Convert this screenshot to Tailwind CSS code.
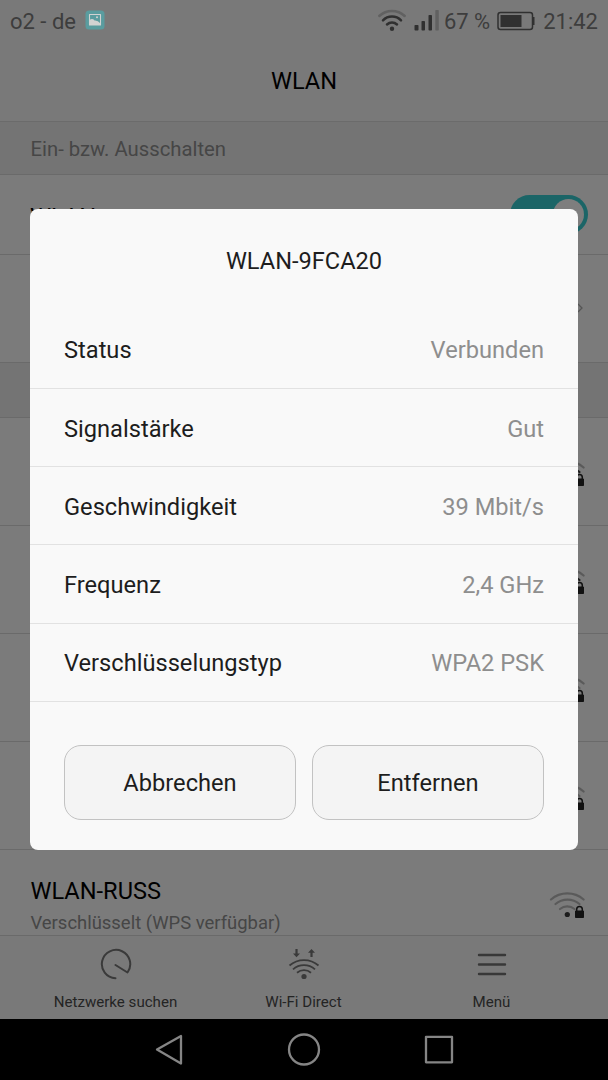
<!DOCTYPE html>
<html lang="de">
<head>
<meta charset="utf-8">
<title>WLAN</title>
<script src="https://cdn.jsdelivr.net/npm/@tailwindcss/browser@4"></script>
</head>
<body class="relative flex h-[1080px] w-[608px] flex-col overflow-hidden bg-[#7b7b7b] font-['Roboto','Noto_Sans',sans-serif] text-black">
<svg class="hidden">
  <symbol id="secured" viewBox="0 0 40 32">
    <g fill="none" stroke-width="2.200" stroke-linecap="round">
      <path d="M6 9.500A25 25 0 0 1 38.600 9.500" stroke="#5a5a5a"/><path d="M10.500 14A18.500 18.500 0 0 1 34.500 14M15 19A11.500 11.500 0 0 1 29.500 19" stroke="currentColor"/>
    </g>
    <circle cx="22.300" cy="24.500" r="2.600" fill="#1c1c1c"/>
    <path d="M30.500 21h8v6.500h-8z" fill="#111" stroke="#111" stroke-linejoin="round"/>
    <path d="M31.700 21v-1.700a2.800 2.800 0 0 1 5.600 0v1.700" fill="none" stroke="#111" stroke-width="1.500"/>
  </symbol>
</svg>

<header class="flex h-[122px] shrink-0 flex-col border-b border-[#6b6b6b] bg-[#797979]">
  <div class="flex h-[42px] items-center pr-[10px] pl-[10px] text-[22px] text-[#3d3d3d]">
    <span class="pt-px">o2 - de</span>
    <svg class="-mt-px ml-[9px] size-5" viewBox="0 0 20 20"><rect x=".5" y=".5" width="19" height="19" rx="3.500" fill="#5a9c9f"/><path d="M4.500 4.500h11v10.500h-11z" fill="none" stroke="#d2d2d2" stroke-width="1.100" stroke-linejoin="round"/><path d="M4.500 10q3-2 5 .5 3-.5 6 3v1.500h-11z" fill="#d2d2d2"/><circle cx="12" cy="7.300" r="1" fill="#d2d2d2"/></svg>
    <svg class="ml-auto h-6 w-[30px]" viewBox="0 0 30 24" fill="none" stroke-width="2.500" stroke-linecap="round"><path d="M2.300 7A18.500 18.500 0 0 1 27.700 7" stroke="#616161"/><path d="M6 11.300A12.500 12.500 0 0 1 24 11.300M10 15.500A7.500 7.500 0 0 1 20 15.500" stroke="#303030"/><circle cx="15" cy="19.700" r="2.200" fill="#303030"/></svg>
    <svg class="ml-[7px] h-6 w-[25px]" viewBox="0 0 25 24"><g fill="#303030"><rect x=".5" y="16" width="4" height="5.500" rx=".8"/><rect x="7.500" y="12" width="3.500" height="9.500" rx=".8"/><rect x="14.500" y="6" width="3.500" height="15.500" rx=".8"/></g><rect x="21.300" y="1" width="3.500" height="20.500" rx=".8" fill="#616161"/></svg>
    <span class="ml-[5px] pt-px">67 %</span>
    <svg class="ml-[7px] h-5 w-[38px]" viewBox="0 0 38 20"><rect x="1" y="1.500" width="34.500" height="17" rx="2.500" fill="none" stroke="#303030" stroke-width="1.500"/><path d="M3.500 4H24.500v12H3.500zM35.500 6h2v8h-2z" fill="#303030"/></svg>
    <span class="ml-[8px] pt-px">21:42</span>
  </div>
  <h1 class="flex h-20 items-center justify-center pt-px text-[23.600px]">WLAN</h1>
</header>

<main class="flex h-[813px] shrink-0 flex-col overflow-hidden">
  <div class="flex h-[53px] shrink-0 items-center border-b border-[#6a6a6a] bg-[#747474] pt-0.5 pl-[30.500px] text-[20.300px] text-[#464646]">Ein- bzw. Ausschalten</div>
  <div class="flex h-20 shrink-0 items-center justify-between border-b border-[#6a6a6a] pr-5 pl-[30px] text-[23.600px]">
    <span class="pt-1.5">WLAN</span>
    <span class="flex h-[39px] w-[78px] items-center justify-end rounded-full bg-[#1b6567] pr-1"><span class="size-[31px] rounded-full bg-[#7e7e7e]"></span></span>
  </div>
  <div class="flex h-[108px] shrink-0 items-center justify-end border-b border-[#6a6a6a] pr-[25px]">
    <svg class="h-4 w-3" viewBox="0 0 12 16" fill="none" stroke="#555" stroke-width="1.300"><path d="M7 3l4 4-4 4"/></svg>
  </div>
  <div class="h-[55px] shrink-0 border-b border-[#6a6a6a] bg-[#747474]"></div>
  <div class="flex h-[108px] shrink-0 items-center justify-end border-b border-[#6a6a6a] pr-[23px] text-[#1c1c1c]"><svg class="mt-1 h-8 w-10"><use href="#secured"/></svg></div>
  <div class="flex h-[108px] shrink-0 items-center justify-end border-b border-[#6a6a6a] pr-[23px] text-[#1c1c1c]"><svg class="mt-1 h-8 w-10"><use href="#secured"/></svg></div>
  <div class="flex h-[108px] shrink-0 items-center justify-end border-b border-[#6a6a6a] pr-[23px] text-[#5a5a5a]"><svg class="mt-1 h-8 w-10"><use href="#secured"/></svg></div>
  <div class="flex h-[108px] shrink-0 items-center justify-end border-b border-[#6a6a6a] pr-[23px] text-[#5a5a5a]"><svg class="mt-1 h-8 w-10"><use href="#secured"/></svg></div>
  <div class="flex h-[108px] shrink-0 items-center justify-between pr-[23px] pl-[30.500px]">
    <div class="pt-[5px]"><p class="text-[23.600px] leading-8">WLAN-RUSS</p><p class="text-[18.450px] leading-8 text-[#464646]">Verschlüsselt (WPS verfügbar)</p></div>
    <svg class="mt-1 h-8 w-10 text-[#5a5a5a]"><use href="#secured"/></svg>
  </div>
</main>

<footer class="grid h-[84px] shrink-0 grid-cols-[repeat(3,188px)] justify-center border-t border-[#6a6a6a] bg-[#797979] pr-px text-[15.100px] text-[#242424]">
  <div class="flex flex-col items-center pt-3"><svg class="size-8" viewBox="0 0 32 32" fill="none" stroke="#3a3a3a" stroke-width="2" stroke-linecap="round" stroke-linejoin="round"><path d="M15.500 30.300A14.200 14.200 0 1 1 27.500 24.500L15.500 17"/></svg><span class="mt-[11px]">Netzwerke suchen</span></div>
  <div class="flex flex-col items-center pt-3"><svg class="size-8" viewBox="0 0 32 32" fill="none" stroke="#3a3a3a" stroke-width="1.800"><path d="M1.500 17.500A22 22 0 0 1 30.500 17.500M5 21.300A16.500 16.500 0 0 1 27 21.300M9 24.700A11 11 0 0 1 23 24.700"/><path d="M8.500 1v6M23.500 9V3" stroke-width="2.200"/><path d="M5 5.500h7L8.500 9.200zM20 4.700h7L23.500 1z" fill="#3a3a3a" stroke="none"/><circle cx="16" cy="28.500" r="2.600" fill="#3a3a3a" stroke="none"/></svg><span class="mt-[11px]">Wi-Fi Direct</span></div>
  <div class="flex flex-col items-center pt-3"><svg class="size-8" viewBox="0 0 32 32" stroke="#383838" stroke-width="2.400" stroke-linecap="round"><path d="M3 7h26M3 16.500h26M3 26h26"/></svg><span class="mt-[11px]">Menü</span></div>
</footer>

<nav class="flex h-[61px] shrink-0 items-center justify-center gap-[100px] bg-black">
  <svg class="h-9 w-9" viewBox="0 0 36 36" fill="none" stroke="#858585" stroke-width="2.300" stroke-linejoin="round"><path d="M7 17.500L31 4v27.500z"/></svg>
  <svg class="h-9 w-9" viewBox="0 0 36 36" fill="none" stroke="#858585" stroke-width="2.300"><circle cx="18" cy="17.500" r="15"/></svg>
  <svg class="h-9 w-9" viewBox="0 0 36 36" fill="none" stroke="#858585" stroke-width="2.300" stroke-linejoin="round"><path d="M4 4.800h26v25.500H4z"/></svg>
</nav>

<section class="absolute top-[209px] left-[30px] flex h-[641px] w-[548px] flex-col rounded-[8px] bg-[#f9f9f9] text-[23.650px] text-[#1d1d1d]">
  <h2 class="flex h-[102px] shrink-0 items-center justify-center pt-1 text-[23.600px]">WLAN-9FCA20</h2>
  <dl class="flex flex-col">
    <div class="flex h-[78px] items-center justify-between border-b border-[#e2e2e2] px-[34px] pt-[3px]"><dt>Status</dt><dd class="text-[#8e8e8e]">Verbunden</dd></div>
    <div class="flex h-[78px] items-center justify-between border-b border-[#e2e2e2] px-[34px] pt-1"><dt>Signalstärke</dt><dd class="text-[#8e8e8e]">Gut</dd></div>
    <div class="flex h-[78px] items-center justify-between border-b border-[#e2e2e2] px-[34px] pt-1"><dt>Geschwindigkeit</dt><dd class="text-[#8e8e8e]">39 Mbit/s</dd></div>
    <div class="flex h-[79px] items-center justify-between border-b border-[#e2e2e2] px-[34px] pt-[3px]"><dt>Frequenz</dt><dd class="text-[#8e8e8e]">2,4 GHz</dd></div>
    <div class="flex h-[78px] items-center justify-between border-b border-[#e2e2e2] px-[34px] pt-[3px]"><dt>Verschlüsselungstyp</dt><dd class="text-[#8e8e8e]">WPA2 PSK</dd></div>
  </dl>
  <div class="mt-[43px] grid grid-cols-2 gap-4 px-[34px]">
    <button class="h-[75px] rounded-[17px] border border-[#c2c2c2] bg-[#f4f4f4] pt-0.5">Abbrechen</button>
    <button class="h-[75px] rounded-[17px] border border-[#c2c2c2] bg-[#f4f4f4] pt-0.5">Entfernen</button>
  </div>
</section>
</body>
</html>
